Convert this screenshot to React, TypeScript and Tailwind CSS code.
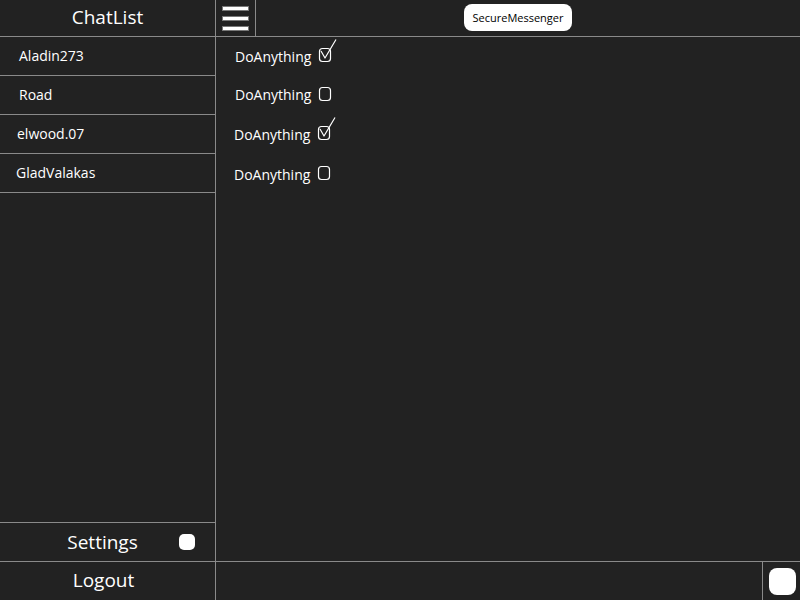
import React from "react";

const chats = [
  { name: "Aladin273", pad: "pl-[19px]" },
  { name: "Road", pad: "pl-[19px]" },
  { name: "elwood.07", pad: "pl-[17px]" },
  { name: "GladValakas", pad: "pl-[16px]" },
];

const tasks = [
  { label: "DoAnything", done: true, cls: "pl-[19px] h-[38px]" },
  { label: "DoAnything", done: false, cls: "pl-[19px] h-[39px]" },
  { label: "DoAnything", done: true, cls: "pl-[18px] h-[40px]" },
  { label: "DoAnything", done: false, cls: "pl-[18px] h-[40px]" },
];

function Check({ done }: { done: boolean }) {
  return (
    <svg width="24" height="30" viewBox="0 0 24 30" className="overflow-visible">
      <rect x="3.5" y="11.5" width="11" height="13" rx="3" fill="none" stroke="white" strokeWidth="1.2" />
      {done && (
        <path d="M5 14 L9 21 L20 2.5" fill="none" stroke="white" strokeWidth="1.2" strokeLinejoin="round" />
      )}
    </svg>
  );
}

export default function App() {
  return (
    <div
      className="flex h-[600px] w-[800px] overflow-hidden bg-[#222222] text-white"
      style={{ fontFamily: '"Open Sans", "Noto Sans", sans-serif' }}
    >
      {/* sidebar */}
      <div className="flex w-[216px] flex-col border-r border-[#8a8a8a]">
        <div className="flex h-[37px] items-center justify-center border-b border-[#8a8a8a] pb-[1px] text-[19px]">
          ChatList
        </div>
        {chats.map((c) => (
          <div key={c.name} className={`flex h-[39px] items-center border-b border-[#8a8a8a] pb-[1px] text-[14px] ${c.pad}`}>
            {c.name}
          </div>
        ))}
        <div className="flex-1" />
        <div className="relative flex h-[40px] items-center justify-center border-y border-[#8a8a8a] text-[19px]">
          <span className="mr-[10px]">Settings</span>
          <span className="absolute left-[179px] top-[11px] h-[16px] w-[16px] rounded-[5px] bg-white" />
        </div>
        <div className="flex h-[38px] items-center justify-center pr-[8px] pb-[1px] text-[19px]">Logout</div>
      </div>

      {/* main */}
      <div className="flex flex-1 flex-col">
        <div className="flex h-[37px] border-b border-[#8a8a8a]">
          <div className="flex w-[40px] flex-col items-center justify-center gap-[7px] border-r border-[#8a8a8a] pr-[1px]">
            <span className="h-[3px] w-[25px] bg-white outline outline-1 outline-[#777]" />
            <span className="h-[3px] w-[25px] bg-white outline outline-1 outline-[#777]" />
            <span className="h-[3px] w-[25px] bg-white outline outline-1 outline-[#777]" />
          </div>
          <div className="flex flex-1 items-center justify-center pr-[20px] pb-[1px]">
            <span className="rounded-[8px] bg-white px-[8px] py-[5px] text-[11px] leading-[17px] text-black">
              SecureMessenger
            </span>
          </div>
        </div>

        <div className="flex-1">
          {tasks.map((t, i) => (
            <div key={i} className={`flex items-center text-[14px] ${t.cls}`}>
              <span className="w-[81px]">{t.label}</span>
              <span className="-mt-[8px]">
                <Check done={t.done} />
              </span>
            </div>
          ))}
        </div>

        <div className="flex h-[39px] border-t border-[#8a8a8a]">
          <div className="flex-1" />
          <div className="flex w-[38px] items-center justify-center border-l border-[#8a8a8a] pl-[1px]">
            <span className="h-[27px] w-[27px] rounded-[8px] bg-white" />
          </div>
        </div>
      </div>
    </div>
  );
}
